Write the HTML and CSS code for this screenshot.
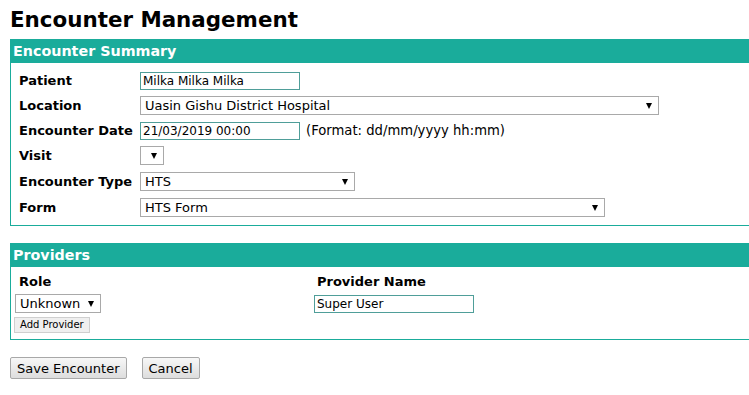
FILE: index.html
```html
<!DOCTYPE html>
<html lang="en">
<head>
    <meta charset="UTF-8">
    <meta name="viewport" content="width=device-width, initial-scale=1.0">
    <title>Encounter Management</title>
    <link rel="stylesheet" href="styles.css">
</head>
<body>
    <h2 class="page-title">Encounter Management</h2>

    <!-- Encounter summary -->
    <div class="box">
        <div class="box-header">Encounter Summary</div>
        <div class="summary">
            <label class="field-label">Patient</label>
            <div class="field"><input type="text" class="text-input" value="Milka Milka Milka"></div>

            <label class="field-label">Location</label>
            <div class="field">
                <span class="sel sel-location">Uasin Gishu District Hospital</span>
            </div>

            <label class="field-label">Encounter Date</label>
            <div class="field">
                <input type="text" class="text-input" value="21/03/2019 00:00">
                <span class="hint">(Format: dd/mm/yyyy hh:mm)</span>
            </div>

            <label class="field-label">Visit</label>
            <div class="field"><span class="sel sel-visit"></span></div>

            <label class="field-label">Encounter Type</label>
            <div class="field"><span class="sel sel-type">HTS</span></div>

            <label class="field-label">Form</label>
            <div class="field"><span class="sel sel-form">HTS Form</span></div>
        </div>
    </div>

    <!-- Providers -->
    <div class="box providers-box">
        <div class="box-header">Providers</div>
        <div class="providers">
            <div class="provider-col role-col">
                <div class="col-label">Role</div>
                <span class="sel sel-role">Unknown</span>
                <button class="small-btn">Add Provider</button>
            </div>
            <div class="provider-col name-col">
                <div class="col-label">Provider Name</div>
                <input type="text" class="text-input" value="Super User">
            </div>
        </div>
    </div>

    <div class="actions">
        <button class="btn">Save Encounter</button>
        <button class="btn">Cancel</button>
    </div>
</body>
</html>
```

FILE: styles.css
```css
html {
    overflow: hidden;
}

body {
    font-family: "DejaVu Sans", Verdana, sans-serif;
    font-size: 13px;
    color: #000;
    background-color: #fff;
    margin: 0;
    padding: 0 10px;
}

.page-title {
    font-size: 21.4px;
    font-weight: bold;
    margin: 0;
    padding-top: 7px;
    height: 32px;
    line-height: 26px;
}

/* teal framed sections */
.box {
    border: 1px solid #1aac9b;
    border-right: none;
    width: 760px;
    margin-top: 0;
}

.box-header {
    background-color: #1aac9b;
    color: #fff;
    font-weight: bold;
    font-size: 14.3px;
    height: 23px;
    line-height: 23px;
    padding-left: 2px;
}

.summary {
    display: grid;
    grid-template-columns: 121px auto;
    grid-template-rows: 25px 25px 25px 25px 26px 26px;
    padding: 5px 0 5px 8px;
    align-items: center;
}

.field-label {
    font-weight: bold;
}

.field {
    display: flex;
    align-items: center;
}

.text-input {
    font-family: "DejaVu Sans", Verdana, sans-serif;
    font-size: 12px;
    color: #000;
    border: 1px solid #4f9e99;
    width: 160px;
    height: 18px;
    padding: 0 2px;
    margin: 0;
    box-sizing: border-box;
    outline: none;
}

.hint {
    margin-left: 6px;
    font-size: 13.2px;
}

/* fake select boxes */
.sel {
    position: relative;
    display: inline-block;
    height: 19px;
    line-height: 17px;
    border: 1px solid #a9a9a9;
    padding-left: 4px;
    box-sizing: border-box;
    background: #fff;
}

.sel::after {
    content: "";
    position: absolute;
    right: 6px;
    top: 6px;
    border-left: 3px solid transparent;
    border-right: 3px solid transparent;
    border-top: 6px solid #000;
}

.sel-location { width: 519px; }
.sel-visit { width: 24px; }
.sel-type { width: 215px; }
.sel-form { width: 465px; }
.sel-role { width: 86px; }

.providers-box {
    margin-top: 17px;
}

.providers {
    display: flex;
    padding: 6px 0 6px 4px;
}

.provider-col {
    display: flex;
    flex-direction: column;
    align-items: flex-start;
}

.role-col {
    width: 299px;
}

.col-label {
    font-weight: bold;
    height: 17px;
    line-height: 17px;
    padding-left: 4px;
    margin-bottom: 4px;
}

.name-col .col-label {
    padding-left: 3px;
}

.name-col .text-input {
    margin-top: 1px;
}

.small-btn {
    font-family: "DejaVu Sans", Verdana, sans-serif;
    font-size: 10px;
    color: #000;
    background: #efefef;
    border: 1px solid #cfcfcf;
    height: 16px;
    padding: 0 5px;
    margin: 4px 0 0 -1px;
    line-height: 14px;
}

.actions {
    display: flex;
    gap: 15px;
    margin-top: 17px;
}

.btn {
    font-family: "DejaVu Sans", Verdana, sans-serif;
    font-size: 13px;
    color: #000;
    background: linear-gradient(#f7f7f7, #dddddd);
    border: 1px solid #a8a8a8;
    border-radius: 2px;
    height: 22px;
    padding: 0 6px;
}
```
